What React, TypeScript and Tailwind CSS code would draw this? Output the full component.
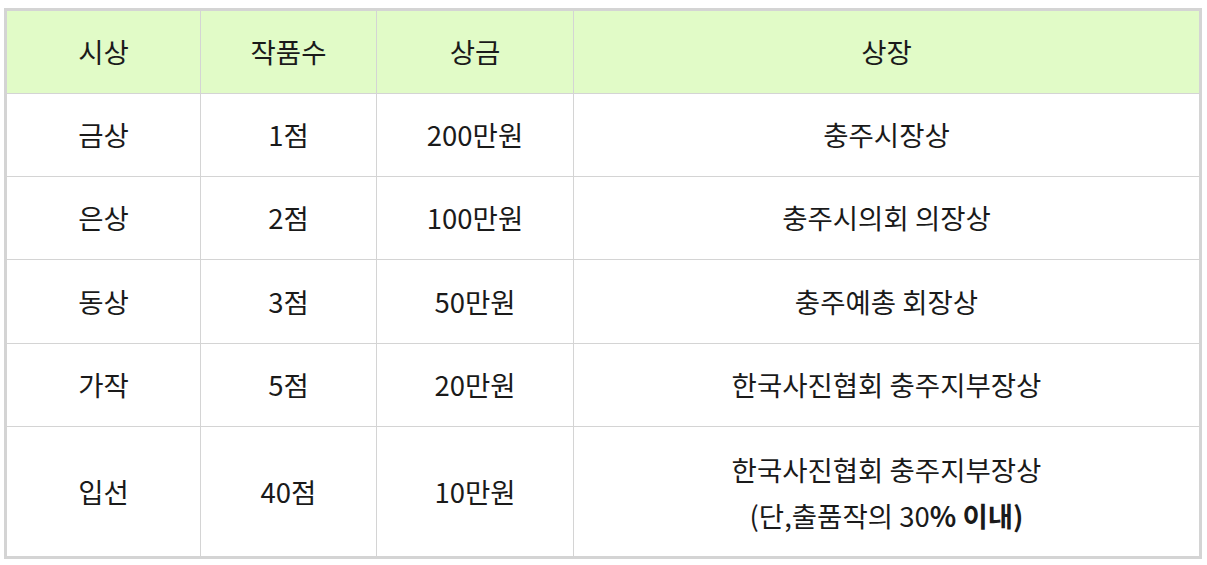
import React from 'react';

const rows = [
  { prize: '금상', count: '1점', money: '200만원', award: '충주시장상', h: 'h-[83px]' },
  { prize: '은상', count: '2점', money: '100만원', award: '충주시의회 의장상', h: 'h-[83px]' },
  { prize: '동상', count: '3점', money: '50만원', award: '충주예총 회장상', h: 'h-[84px]' },
  { prize: '가작', count: '5점', money: '20만원', award: '한국사진협회 충주지부장상', h: 'h-[83px]' },
];

const cell = 'border border-[#d4d4d4] text-center align-middle';

const App: React.FC = () => {
  return (
    <div
      className="bg-white pl-[4px] pt-[8px] text-[27.5px] text-[#1a1a1a]"
      style={{ fontFamily: '"Noto Sans CJK KR", "Noto Sans", sans-serif' }}
    >
      <table className="w-[1198px] table-fixed border-collapse border-[3px] border-[#d4d4d4]">
        <colgroup>
          <col className="w-[195px]" />
          <col className="w-[176px]" />
          <col className="w-[197px]" />
          <col />
        </colgroup>
        <thead>
          <tr className="h-[84px] bg-[#e1fbc7]">
            <th className={`${cell} font-normal`}>시상</th>
            <th className={`${cell} font-normal`}>작품수</th>
            <th className={`${cell} font-normal`}>상금</th>
            <th className={`${cell} font-normal`}>상장</th>
          </tr>
        </thead>
        <tbody>
          {rows.map((r, i) => (
            <tr key={i} className={r.h}>
              <td className={cell}>{r.prize}</td>
              <td className={cell}>{r.count}</td>
              <td className={cell}>{r.money}</td>
              <td className={cell}>{r.award}</td>
            </tr>
          ))}
          <tr className="h-[131px]">
            <td className={cell}>입선</td>
            <td className={cell}>40점</td>
            <td className={cell}>10만원</td>
            <td className={`${cell} leading-[46px]`}>
              <div>한국사진협회 충주지부장상</div>
              <div>
                (단,출품작의 30<span className="font-semibold">% 이내)</span>
              </div>
            </td>
          </tr>
        </tbody>
      </table>
    </div>
  );
};

export default App;
